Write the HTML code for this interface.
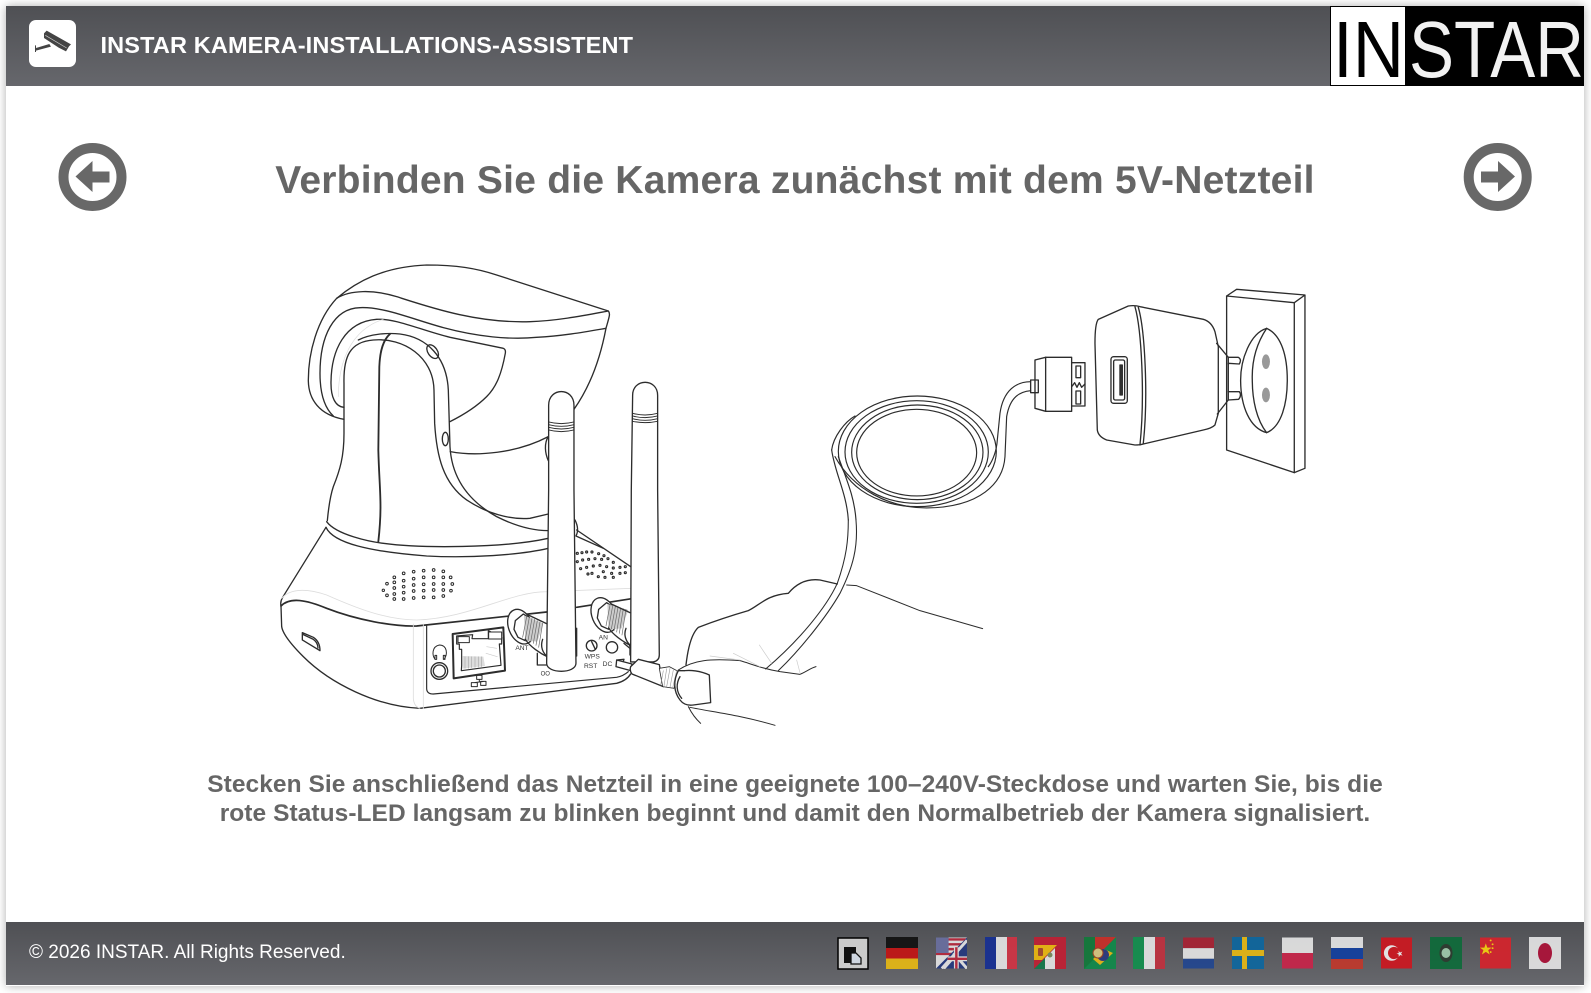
<!DOCTYPE html>
<html lang="de">
<head>
<meta charset="utf-8">
<title>INSTAR Kamera-Installations-Assistent</title>
<style>
html,body{margin:0;padding:0;background:#fff;width:1591px;height:993px;overflow:hidden;font-family:"Liberation Sans",sans-serif}
#box{position:absolute;left:6px;top:6px;width:1578px;height:980px;background:#fff;box-shadow:0 0 9px rgba(0,0,0,.32)}
.bar{position:absolute;left:6px;width:1578px;background:linear-gradient(#4f5054,#66676c)}
#hd{top:6px;height:80px}
#ft{top:922px;height:63px}
.t{position:absolute;white-space:nowrap}
#ht{left:100.5px;top:30px;font:bold 23.5px/30px "Liberation Sans",sans-serif;color:#fff;letter-spacing:.14px}
#h1{left:6px;width:1578px;top:158.500px;text-align:center;font:bold 39px/44px "Liberation Sans",sans-serif;color:#666;letter-spacing:.23px}
#p{left:6px;width:1578px;top:770px;text-align:center;font:bold 24.5px/29px "Liberation Sans",sans-serif;color:#666;letter-spacing:.06px}
#c{left:29px;top:941px;font:19px/24px "Liberation Sans",sans-serif;color:#fff}
svg#art{position:absolute;left:0;top:0}
</style>
</head>
<body>
<div id="box"></div>
<div id="hd" class="bar"></div>
<div id="ft" class="bar"></div>
<div id="ht" class="t">INSTAR KAMERA-INSTALLATIONS-ASSISTENT</div>
<div id="h1" class="t">Verbinden Sie die Kamera zunächst mit dem 5V-Netzteil</div>
<div id="p" class="t">Stecken Sie anschließend das Netzteil in eine geeignete 100–240V-Steckdose und warten Sie, bis die<br>rote Status-LED langsam zu blinken beginnt und damit den Normalbetrieb der Kamera signalisiert.</div>
<div id="c" class="t">© 2026 INSTAR. All Rights Reserved.</div>

<svg id="art" width="1591" height="993" viewBox="0 0 1591 993" xmlns="http://www.w3.org/2000/svg">
<!-- header logo icon -->
<rect x="29" y="20" width="47" height="47" rx="7" fill="#fff"/>
<g transform="translate(24,16) scale(.3333)">
<path d="M60 52 68 44 141 85 135 91 126 106 104 95 60 66Z" fill="#444"/>
<path d="M64 58 128 96" stroke="#ccc" stroke-width="2" fill="none"/>
<path d="M33 88H36V96L76 84 81 92 36 104V108H33Z" fill="#444"/>
</g>
<!-- INSTAR logo -->
<rect x="1330" y="6" width="254" height="80" fill="#000"/>
<rect x="1331" y="7" width="74" height="78" fill="#fff"/>
<text x="1333" y="77" font-family="Liberation Sans" font-size="80" fill="#000" textLength="71" lengthAdjust="spacingAndGlyphs">IN</text>
<text x="1409" y="77" font-family="Liberation Sans" font-size="80" fill="#f2f2f2" textLength="175" lengthAdjust="spacingAndGlyphs">STAR</text>
<!-- nav arrows -->
<circle cx="92.500" cy="177" r="29" fill="#fff" stroke="#686868" stroke-width="10"/>
<path d="M75.500 176.500 92.500 161V171.500H109.500V182.500H92.500V192Z" fill="#686868"/>
<circle cx="1497.700" cy="177" r="29" fill="#fff" stroke="#686868" stroke-width="10"/>
<path d="M1515 176.500 1498 161V171.500H1481V182.500H1498V192Z" fill="#686868"/>

<!-- CAMERA HEAD (zoom 3 coords) -->
<g transform="translate(270,250) scale(.3333)" fill="none" stroke="#2c2c2c" stroke-width="4" stroke-linejoin="round" stroke-linecap="round">
<path d="M200 145C260 95 340 50 470 45 560 45 620 55 680 75L1015 183"/>
<path d="M200 145C140 210 115 310 115 390 115 450 150 495 222 508"/>
<path d="M200 145C240 120 310 118 380 140 480 172 620 220 780 215 860 213 950 195 1015 183 1022 190 1018 200 1008 235 990 330 960 410 912 478"/>
<path d="M190 498C160 470 150 420 150 370 150 260 190 175 270 173 340 170 420 205 520 233 620 260 720 270 800 262 880 258 950 245 1008 235"/>
<path d="M222 472C195 470 183 440 183 400 183 300 225 215 320 208 380 205 450 240 540 262L700 295Q708 298 706 310C695 370 680 410 650 440 620 470 580 495 540 515"/>
<path d="M205 440C205 340 240 240 340 208" stroke="#ddd" stroke-width="2"/>
<path d="M172 812C175 780 180 740 190 710 210 660 222 620 222 550V400C220 320 240 275 310 270 400 262 490 320 492 420L494 520C500 620 520 700 590 750 650 790 720 810 780 805L835 792"/>
<path d="M265 270C300 252 350 248 390 252 470 262 530 320 535 420L540 590C545 680 590 750 680 800 730 825 780 842 835 842"/>
<path d="M360 252C340 270 330 300 328 350L325 600C328 720 338 760 325 875" stroke-width="5.500"/>
<ellipse cx="488" cy="305" rx="14" ry="23" transform="rotate(-35 488 305)"/>
<ellipse cx="526" cy="567" rx="9" ry="20"/>
<path d="M541 605C620 620 740 610 835 560"/>
<path d="M835 560C822 580 825 610 835 632"/>
<path d="M915 810C925 830 925 845 918 858L1000 895"/>
</g>

<!-- CAMERA BASE (zoom 4 coords) -->
<g transform="translate(270,520) scale(.3333)" fill="none" stroke="#2c2c2c" stroke-width="4" stroke-linejoin="round" stroke-linecap="round">
<path d="M170 5C200 45 300 65 340 70 450 85 700 85 835 55"/>
<path d="M168 22C190 70 300 95 470 108 600 115 750 105 835 85"/>
<path d="M920 30 1085 142"/>
<path d="M168 22 38 232Q30 245 33 258L35 320C38 340 60 370 100 410 180 490 320 560 450 565L1040 490Q1070 482 1082 462"/>
<path d="M33 258C60 230 110 240 170 265 260 300 370 320 440 318L830 276M920 262 1085 236" stroke-width="5"/>
<path d="M35 235C60 205 110 205 170 225 260 265 350 300 440 300 600 295 720 215 830 215L1085 205" stroke="#ddd" stroke-width="2.500"/>
<path d="M430 312V535Q432 560 450 565M460 312V565" stroke="#ddd" stroke-width="2.500"/>
<path d="M470 318V505Q470 522 490 522L1040 472Q1060 468 1075 455" stroke-width="3.500"/>
<path d="M97 338 130 352Q150 365 150 392L97 360Z"/>
<path d="M100 344 128 357Q143 366 144 384"/>
<g stroke-width="3">
<circle cx="340" cy="211" r="3.500"/><circle cx="351" cy="191" r="4"/><circle cx="351" cy="226" r="4"/>
<circle cx="373" cy="172" r="4"/><circle cx="373" cy="187" r="4"/><circle cx="373" cy="204" r="4"/><circle cx="373" cy="222" r="4"/><circle cx="373" cy="237" r="4"/>
<circle cx="401" cy="160" r="4"/><circle cx="401" cy="182" r="4"/><circle cx="401" cy="200" r="4"/><circle cx="401" cy="218" r="4"/><circle cx="401" cy="237" r="4"/>
<circle cx="431" cy="155" r="4"/><circle cx="431" cy="176" r="4"/><circle cx="431" cy="195" r="4"/><circle cx="431" cy="213" r="4"/><circle cx="431" cy="234" r="4"/>
<circle cx="461" cy="152" r="4"/><circle cx="461" cy="172" r="4"/><circle cx="461" cy="193" r="4"/><circle cx="461" cy="212" r="4"/><circle cx="461" cy="232" r="4"/>
<circle cx="491" cy="150" r="4"/><circle cx="491" cy="172" r="4"/><circle cx="491" cy="192" r="4"/><circle cx="491" cy="210" r="4"/><circle cx="491" cy="232" r="4"/>
<circle cx="520" cy="154" r="4"/><circle cx="520" cy="172" r="4"/><circle cx="520" cy="192" r="4"/><circle cx="520" cy="210" r="4"/><circle cx="520" cy="228" r="4"/>
<circle cx="542" cy="172" r="4"/><circle cx="547" cy="192" r="4"/><circle cx="543" cy="212" r="4"/>
</g>
<g stroke-width="3.500">
<circle cx="922" cy="100" r="3"/><circle cx="936" cy="98" r="3"/><circle cx="950" cy="96" r="3"/><circle cx="966" cy="96" r="3"/><circle cx="986" cy="101" r="3"/><circle cx="1002" cy="107" r="3"/>
<circle cx="922" cy="125" r="3"/><circle cx="938" cy="120" r="3"/><circle cx="956" cy="118" r="3"/><circle cx="975" cy="116" r="3"/><circle cx="995" cy="118" r="3"/><circle cx="1014" cy="116" r="3"/><circle cx="1030" cy="127" r="3"/>
<circle cx="932" cy="146" r="3"/><circle cx="950" cy="142" r="3"/><circle cx="970" cy="138" r="3"/><circle cx="990" cy="136" r="3"/><circle cx="1010" cy="140" r="3"/><circle cx="1030" cy="144" r="3"/><circle cx="1050" cy="142" r="3"/><circle cx="1066" cy="140" r="3"/>
<circle cx="954" cy="162" r="3"/><circle cx="966" cy="160" r="3"/><circle cx="985" cy="170" r="3"/><circle cx="1000" cy="155" r="3"/><circle cx="1005" cy="172" r="3"/><circle cx="1025" cy="160" r="3"/><circle cx="1030" cy="172" r="3"/><circle cx="1050" cy="160" r="3"/><circle cx="1066" cy="158" r="3"/>
</g>
</g>

<!-- PANEL DETAIL (zoom 11 coords) -->
<g transform="translate(420,600) scale(.3333)" fill="none" stroke="#2c2c2c" stroke-width="4" stroke-linejoin="round" stroke-linecap="round">
<path d="M98 102 250 82 255 212 101 235Z" stroke-width="6"/>
<path d="M110 108V132H118V148H125V196L124 212 243 196 238 132H245V112L205 92V116H156L158 104Z" stroke-width="3.500"/>
<path d="M114 110H148V128H114ZM206 96H245V117H206Z" stroke-width="3" fill="#fff"/>
<path d="M128 168 190 170 195 198 128 206Z" fill="#ddd" stroke="none"/>
<path d="M135 170V205M145 170V205M155 170V203M165 170V202M175 170V201M185 170V200" stroke="#aaa" stroke-width="2"/>
<path d="M200 140 230 145M198 160 232 170" stroke="#ccc" stroke-width="2"/>
<path d="M170 226H186V238H170ZM154 248H172V260H154ZM182 244H198V256H182ZM178 238V246M163 248 192 244" stroke-width="3"/>
<path d="M45 178C36 165 35 140 58 135 82 135 84 165 72 178M45 166H50V178H45ZM70 166H75V178H70Z" stroke-width="3"/>
<circle cx="58" cy="213" r="25"/>
<circle cx="58" cy="213" r="18"/>
<!-- left connector -->
<ellipse cx="302" cy="80" rx="36" ry="54" transform="rotate(-22 302 80)" fill="#fff"/>
<path d="M286 62 310 42 325 52 316 122 294 112 282 88Z"/>
<path d="M312 46 370 70 352 125 316 122Z" fill="#ccc" stroke="none"/>
<path d="M320 50 308 112M328 52 316 118M336 55 324 122M344 58 332 126M352 62 340 130M360 66 348 136M368 70 356 142" stroke="#666" stroke-width="2"/>
<path d="M325 45 382 72M316 118C330 140 360 160 385 172"/>
<path d="M368 118C360 140 368 160 385 172" />
<text x="286" y="150" font-family="Liberation Sans" font-size="20" fill="#333" stroke="none">ANT</text>
<text x="362" y="226" font-family="Liberation Sans" font-size="18" fill="#333" stroke="none">OO</text>
<path d="M352 160V195H400"/>
<path d="M470 85V168"/>
<!-- right connector -->
<ellipse cx="552" cy="45" rx="36" ry="54" transform="rotate(-22 552 45)" fill="#fff"/>
<path d="M536 28 560 8 575 18 566 88 544 78 532 54Z"/>
<path d="M562 12 625 30 605 85 566 88Z" fill="#ccc" stroke="none"/>
<path d="M570 16 558 78M578 18 566 84M586 20 574 88M594 22 582 92M602 24 590 96M610 26 598 100M618 28 606 105" stroke="#666" stroke-width="2"/>
<path d="M574 12 630 38M566 84C580 105 610 125 632 137"/>
<path d="M618 85C610 105 618 125 632 137"/>
<circle cx="576" cy="142" r="17" fill="#fff"/>
<text x="536" y="118" font-family="Liberation Sans" font-size="20" fill="#333" stroke="none">AN</text>
<circle cx="515" cy="137" r="16"/>
<path d="M515 125 526 148"/>
<text x="494" y="175" font-family="Liberation Sans" font-size="20" fill="#333" stroke="none">WPS</text>
<text x="492" y="204" font-family="Liberation Sans" font-size="20" fill="#333" stroke="none">RST</text>
<text x="548" y="198" font-family="Liberation Sans" font-size="20" fill="#333" stroke="none">DC</text>
<path d="M590 180 612 178 606 196M612 130 630 145V165"/>
<circle cx="387" cy="163" r="5"/>
<circle cx="634" cy="137" r="5"/>
</g>

<!-- ANTENNAS -->
<g transform="translate(270,250) scale(.3333)" fill="#fff" stroke="#2c2c2c" stroke-width="4" stroke-linecap="round" stroke-linejoin="round">
<path d="M836 466C836 411 912 411 912 466V720L918 1240C918 1272 830 1272 830 1240L836 720Z"/>
<path d="M1088 436C1088 384 1163 384 1163 436V720L1168 1215Q1168 1232 1150 1236H1082L1084 720Z"/>
<g fill="none" stroke-width="2.800">
<path d="M836 516Q874 526 912 516M836 524Q874 534 912 524M836 532Q874 542 912 532M836 540Q874 550 912 540"/>
<path d="M1088 490Q1125 500 1163 490M1088 498Q1125 508 1163 498M1088 506Q1125 516 1163 506M1088 514Q1125 522 1163 514"/>
</g>
</g>

<!-- PLUG, HAND (zoom 5 coords) -->
<g transform="translate(600,520) scale(.3333)" fill="none" stroke="#2c2c2c" stroke-width="4" stroke-linejoin="round" stroke-linecap="round">
<path d="M50 420 96 432 92 452 48 440Z" fill="#fff"/>
<path d="M115 418 178 434 190 500 96 462Q88 452 92 440Z" fill="#fff"/>
<path d="M178 445 208 440 236 455 222 505 188 500Z" fill="#fff" stroke-width="2.500"/>
<path d="M190 452 182 495M200 446 192 498M210 445 200 500M220 450 210 502M230 452 218 504" stroke="#999" stroke-width="1.800"/>
<path d="M258 435C262 400 270 345 295 322 340 305 400 285 445 272 480 255 500 225 565 220 590 190 620 175 660 180L712 192"/>
<path d="M740 195 770 197 960 272 1148 326" stroke-width="3"/>
<path d="M745 0C745 60 740 110 712 190 680 260 600 360 497 447" stroke-width="3.200"/>
<path d="M768 0C775 80 760 140 720 220 680 290 600 390 535 452" stroke-width="3.200"/>
<path d="M235 450C280 420 330 415 420 422 450 430 480 445 540 455L600 463C620 455 630 445 648 440" stroke-width="3"/>
<path d="M235 452C220 480 220 515 240 540 250 553 265 557 280 555L332 548 328 465C300 452 270 450 255 452Z" fill="#fff"/>
<path d="M240 470C228 490 228 515 245 535"/>
<path d="M270 562C330 575 420 585 525 616" stroke-width="3"/>
<path d="M265 560C275 580 285 595 302 610" stroke-width="3"/>
<path d="M330 408 420 420M400 400 480 440M478 375 515 430M590 420 600 458" stroke="#ccc" stroke-width="2"/>
</g>

<!-- CHARGER, CABLE (zoom 6 coords) -->
<g transform="translate(820,280) scale(.3333)" fill="none" stroke="#2c2c2c" stroke-width="4" stroke-linejoin="round" stroke-linecap="round">
<path d="M1220 48 1423 68V578L1220 510Z"/>
<path d="M1220 48 1250 28 1455 45 1423 68M1455 45V565L1423 578"/>
<path d="M1340 145C1290 160 1262 240 1262 300 1262 380 1290 445 1340 458 1385 440 1402 370 1402 300 1402 230 1385 165 1340 145Z"/>
<path d="M1340 145C1310 190 1295 240 1297 300 1297 360 1310 420 1340 458"/>
<ellipse cx="1338" cy="245" rx="12" ry="22" fill="#999" stroke="none"/>
<ellipse cx="1338" cy="345" rx="12" ry="22" fill="#999" stroke="none"/>
<path d="M1190 190 1225 232H1255Q1266 238 1258 252L1225 250V335H1258Q1266 345 1256 358L1225 360 1192 402"/>
<path d="M1225 232V252M1225 335V360"/>
<path d="M835 118 925 78Q945 75 960 80L1150 118Q1175 125 1185 155L1195 200V400L1185 435Q1175 445 1150 450L970 492Q960 495 945 495L860 480Q835 470 832 450L825 190Q825 130 835 118Z"/>
<path d="M945 80C965 150 975 350 960 495M955 82C975 150 985 350 970 490"/>
<rect x="873" y="230" width="49" height="140" rx="8"/>
<rect x="881" y="240" width="33" height="120" rx="5"/>
<rect x="900" y="255" width="7" height="90" fill="#333"/>
<path d="M645 240 677 232H755V394H677L645 385Z"/>
<path d="M677 232V392"/>
<path d="M755 248H795V378H755"/>
<path d="M768 258H782V293H768ZM768 333H782V372H768Z"/>
<path d="M757 318 764 308 771 322 778 308 785 322 795 312"/>
<rect x="632" y="300" width="23" height="38"/>
<path d="M632 305C590 305 550 330 540 400L532 480C530 510 520 540 505 560" stroke-width="3.500"/>
<path d="M632 332C600 335 570 350 560 410L555 530C550 610 480 682 320 684 210 684 100 630 45 530" stroke-width="3.500"/>
<ellipse cx="290" cy="518" rx="180" ry="130" stroke-width="3.500"/>
<ellipse cx="292" cy="517" rx="197" ry="142" stroke-width="3.500"/>
<ellipse cx="290" cy="516" rx="215" ry="154" stroke-width="3.500"/>
<ellipse cx="292" cy="514" rx="237" ry="166" stroke-width="3.500"/>
<path d="M35 510C40 470 75 425 105 408" stroke-width="3.500"/>
<path d="M35 510C45 580 80 640 85 720M55 530C80 600 103 650 108 720" stroke-width="3.500"/>
</g>

<!-- footer language icon -->
<rect x="838" y="938" width="30" height="31" fill="#cbcbcb" stroke="#000" stroke-width="1.500"/>
<path d="M844 947H856V953H851V963H844Z" fill="#111"/>
<path d="M851 953H856L861 958V964H851Z" fill="#cfd6e0" stroke="#111" stroke-width="1.300"/>

<!-- FLAGS -->
<g opacity=".92">
<svg x="886" y="937" width="32" height="32" viewBox="0 0 32 32"><rect width="32" height="11" fill="#111"/><rect y="11" width="32" height="10.500" fill="#c41414"/><rect y="21.500" width="32" height="10.500" fill="#e6b814"/></svg>
<svg x="936" y="937" width="31" height="32" viewBox="0 0 32 32">
<rect width="32" height="32" fill="#e4e4e4"/><path d="M0 2H32M0 7H32M0 12H32M0 17H32" stroke="#b8283c" stroke-width="2.500"/><rect width="13" height="16" fill="#6a6fa0"/>
<path d="M32 0 0 32H32Z" fill="#24397f"/><path d="M32 3 6 32M18 16 32 32M8 32 22 16" stroke="#e4e4e4" stroke-width="3"/><path d="M21 10V32M12 22H32" stroke="#e4e4e4" stroke-width="5"/><path d="M21 10V32M12 22H32" stroke="#b8283c" stroke-width="2.500"/>
</svg>
<svg x="985" y="937" width="32" height="32" viewBox="0 0 32 32"><rect width="11" height="32" fill="#162f94"/><rect x="11" width="11" height="32" fill="#e4e4e4"/><rect x="22" width="10" height="32" fill="#d13344"/></svg>
<svg x="1034" y="937" width="32" height="32" viewBox="0 0 32 32">
<rect width="32" height="32" fill="#c01f33"/><path d="M0 8H23L8 23H0Z" fill="#edb90f"/><rect x="4" y="11" width="5" height="8" rx="1" fill="#a54a2c"/>
<path d="M0 32 11 21V32Z" fill="#12794b"/><path d="M11 32V21L21 11V32Z" fill="#e4e4e4"/><circle cx="16" cy="18" r="2.500" fill="#7a8a5c"/>
</svg>
<svg x="1084" y="937" width="32" height="32" viewBox="0 0 32 32">
<rect width="32" height="32" fill="#0f8a4a"/><path d="M0 0H11V21L0 32Z" fill="#117a3a"/><path d="M11 0H32L11 21Z" fill="#c82e28"/>
<path d="M20 12 29 16 16 28 9 22Z" fill="#e6b814"/><circle cx="19" cy="18" r="6" fill="#2a3a80"/><circle cx="14" cy="16" r="5" fill="#d8c880" stroke="#a04020"/>
</svg>
<svg x="1133" y="937" width="32" height="32" viewBox="0 0 32 32"><rect width="11" height="32" fill="#12904e"/><rect x="11" width="11" height="32" fill="#e4e4e4"/><rect x="22" width="10" height="32" fill="#c0313f"/></svg>
<svg x="1183" y="937" width="31" height="32" viewBox="0 0 32 32"><rect width="32" height="11" fill="#a82233"/><rect y="11" width="32" height="11" fill="#e4e4e4"/><rect y="22" width="32" height="10" fill="#224690"/></svg>
<svg x="1232" y="937" width="32" height="32" viewBox="0 0 32 32"><rect width="32" height="32" fill="#0d679f"/><rect y="13" width="32" height="6" fill="#e6b814"/><rect x="10" width="5" height="32" fill="#e6b814"/></svg>
<svg x="1282" y="937" width="31" height="32" viewBox="0 0 32 32"><rect width="32" height="16" fill="#e4e4e4"/><rect y="16" width="32" height="16" fill="#c92449"/></svg>
<svg x="1331" y="937" width="32" height="32" viewBox="0 0 32 32"><rect width="32" height="11" fill="#e4e4e4"/><rect y="11" width="32" height="11" fill="#123f9f"/><rect y="22" width="32" height="10" fill="#c0382c"/></svg>
<svg x="1381" y="937" width="31" height="32" viewBox="0 0 32 32"><rect width="32" height="32" fill="#cd1720"/><circle cx="11" cy="16" r="8" fill="#eee"/><circle cx="13.500" cy="16" r="6.300" fill="#cd1720"/><path d="M18 13.500 19.600 15.500 22 14.600 20.700 16.700 22.200 18.700 19.800 18 18.300 20V17.500L16 16.600 18.400 16Z" fill="#eee"/></svg>
<svg x="1430" y="937" width="32" height="32" viewBox="0 0 32 32"><rect width="32" height="32" fill="#0e6b3a"/><ellipse cx="16" cy="16" rx="6.500" ry="9" fill="#2c3a2e"/><ellipse cx="16" cy="16" rx="4.500" ry="5" fill="#9fc9aa"/></svg>
<svg x="1480" y="937" width="31" height="32" viewBox="0 0 32 32"><rect width="32" height="32" fill="#d5232c"/><path d="M5 5 6.500 9.500H11L7.500 12 9 16.500 5 13.800 1 16.500 2.500 12 -1 9.500H3.500Z" fill="#f6d10e" transform="translate(1,1)"/><circle cx="11" cy="3" r="1" fill="#f6d10e"/><circle cx="13" cy="7" r="1" fill="#f6d10e"/><circle cx="13" cy="11" r="1" fill="#f6d10e"/><circle cx="11" cy="15" r="1" fill="#f6d10e"/></svg>
<svg x="1529" y="937" width="32" height="32" viewBox="0 0 32 32"><rect width="32" height="32" fill="#e4e4e4"/><ellipse cx="16" cy="16" rx="7" ry="10" fill="#ad1238"/></svg>
</g>
</svg>
</body>
</html>
